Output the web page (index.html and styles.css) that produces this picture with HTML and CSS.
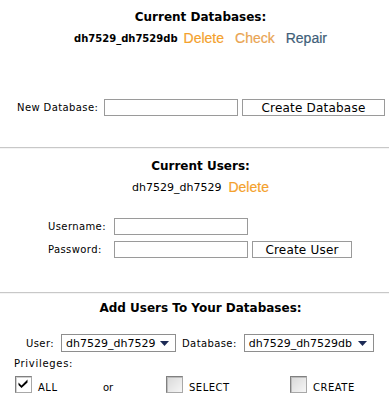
FILE: index.html
```html
<!DOCTYPE html>
<html>
<head>
    <meta charset="UTF-8">
    <title>MySQL Databases</title>
    <link rel="stylesheet" href="styles.css">
</head>
<body>
<div class="section first">
    <h2>Current Databases:</h2>
    <div class="item-row">
        <span class="db-name">dh7529_dh7529db</span>
        <a href="#" class="action delete">Delete</a>
        <a href="#" class="action check">Check</a>
        <a href="#" class="action repair">Repair</a>
    </div>
    <div class="new-db">
        <label class="label">New Database:</label>
        <input type="text" class="field db-field">
        <button class="btn db-btn">Create Database</button>
    </div>
</div>

<hr class="divider">

<div class="section second">
    <h2>Current Users:</h2>
    <div class="item-row">
        <span class="user-name">dh7529_dh7529</span>
        <a href="#" class="action delete">Delete</a>
    </div>
    <div class="user-form">
        <label class="label">Username:</label>
        <input type="text" class="field">
        <span></span>
        <label class="label">Password:</label>
        <input type="password" class="field">
        <button class="btn user-btn">Create User</button>
    </div>
</div>

<hr class="divider">

<div class="section third">
    <h2>Add Users To Your Databases:</h2>
    <div class="grant-row">
        <label class="label">User:</label>
        <div class="select user-select">
            <span>dh7529_dh7529</span>
            <svg width="9" height="5" viewBox="0 0 9 5"><path d="M0 0H9L4.5 5Z" fill="#1c2a55"/></svg>
        </div>
        <label class="label">Database:</label>
        <div class="select db-select">
            <span>dh7529_dh7529db</span>
            <svg width="9" height="5" viewBox="0 0 9 5"><path d="M0 0H9L4.5 5Z" fill="#1c2a55"/></svg>
        </div>
    </div>
    <div class="privileges">Privileges:</div>
    <div class="priv-row">
        <span class="box checked">
            <svg width="10" height="9" viewBox="0 0 10 9"><path d="M0.5 3.5L3.5 6.5L9.5 0.5V3.5L3.5 9L0.5 6Z" fill="#000"/></svg>
        </span>
        <span class="priv-label all">ALL</span>
        <span class="or">or</span>
        <span class="box"></span>
        <span class="priv-label select-lbl">SELECT</span>
        <span class="box"></span>
        <span class="priv-label">CREATE</span>
    </div>
</div>
</body>
</html>
```

FILE: styles.css
```css
body {
    margin: 0;
    font-family: "DejaVu Sans", Verdana, sans-serif;
    font-size: 10px;
    color: #000;
    background: #fff;
}
.section h2 {
    margin: 0;
    padding-left: 12px;
    text-align: center;
    font-size: 12px;
    line-height: 14px;
    font-weight: bold;
}
.first {
    padding-top: 10px;
}
.second {
    padding-top: 10px;
}
.third {
    padding-top: 7px;
}
.item-row {
    display: flex;
    justify-content: center;
    align-items: center;
    margin-top: 5px;
    padding-left: 12px;
    height: 18px;
}
.db-name {
    font-weight: bold;
    font-size: 10px;
}
.user-name {
    font-size: 11px;
}
.action {
    font-family: "Liberation Sans", Arial, sans-serif;
    font-size: 14px;
    text-decoration: none;
    margin-left: 6px;
    -webkit-text-stroke: 0.2px;
}
.user-name + .action {
    margin-left: 7px;
}
.action + .action {
    margin-left: 11px;
}
.delete {
    color: #f4a12c;
}
.check {
    color: #e9a452;
}
.repair {
    color: #3f6079;
}
.label {
    font-size: 10px;
    letter-spacing: 0.4px;
}
.field {
    box-sizing: border-box;
    height: 17px;
    border: 1px solid #9a9a9a;
    padding: 0 2px;
    margin: 0;
    background: #fff;
}
.btn {
    box-sizing: border-box;
    height: 17px;
    border: 1px solid #9a9a9a;
    background: #fff;
    font-family: "DejaVu Sans", Verdana, sans-serif;
    font-size: 12px;
    letter-spacing: 0.2px;
    line-height: 14px;
    padding: 0;
    margin: 0;
    color: #000;
}
.new-db {
    display: flex;
    align-items: center;
    margin: 52px 0 31px 17px;
}
.new-db .label {
    width: 87px;
}
.db-field {
    width: 134px;
}
.db-btn {
    width: 143px;
    margin-left: 4px;
}
.divider {
    border: 0;
    border-top: 1px solid #c8c8c8;
    border-bottom: 1px solid #f4f4f4;
    margin: 0;
}
.user-form {
    display: grid;
    grid-template-columns: 62px 134px 100px;
    column-gap: 4px;
    row-gap: 6px;
    align-items: center;
    margin: 22px 0 34px 48px;
}
.user-form .field {
    width: 134px;
}
.user-btn {
    width: 100px;
}
.grant-row {
    display: flex;
    align-items: center;
    margin: 19px 0 0 26px;
}
.select {
    box-sizing: border-box;
    height: 18px;
    border: 1px solid #8e8e8e;
    display: flex;
    align-items: center;
    justify-content: space-between;
    padding: 0 6px 0 4px;
    font-size: 11px;
    background: #fff;
}
.user-select {
    width: 115px;
    margin: 0 6px 0 7px;
}
.db-select {
    width: 130px;
    margin-left: 7px;
}
.privileges {
    margin: 6px 0 0 14px;
    line-height: 12px;
    letter-spacing: 0.7px;
}
.priv-row {
    display: flex;
    align-items: flex-end;
    margin: 6px 0 0 15px;
}
.box {
    box-sizing: border-box;
    width: 17px;
    height: 17px;
    border: 1px solid #808080;
    border-right-color: #a8a8a8;
    border-bottom-color: #a8a8a8;
    background: linear-gradient(135deg, #d8d8d8, #f6f6f6);
    box-shadow: inset 1px 1px 0 #bcbcbc;
    display: flex;
    align-items: flex-start;
    justify-content: flex-start;
    padding: 2px 0 0 2px;
}
.box.checked {
    background: #fff;
    box-shadow: inset 1px 1px 0 #d0d0d0;
}
.priv-label {
    font-size: 10px;
    letter-spacing: 0.5px;
    margin-left: 6px;
    line-height: 11px;
}
.all {
    width: 65px;
}
.or {
    width: 63px;
    line-height: 11px;
}
.select-lbl {
    width: 101px;
}
```
